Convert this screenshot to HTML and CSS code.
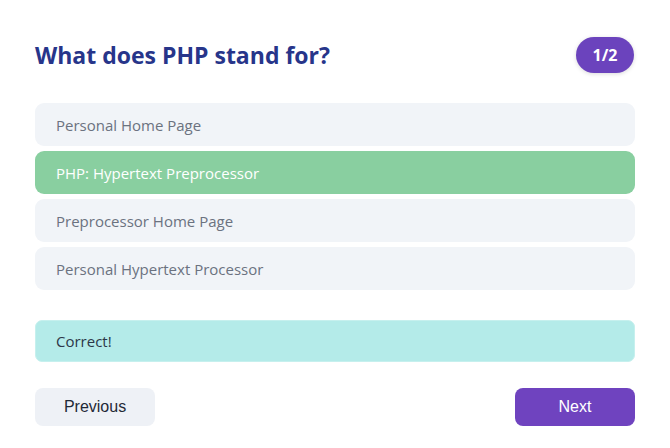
FILE: index.html
```html
<!DOCTYPE html>
<html>
<head>
<meta charset="utf-8">
<link rel="stylesheet" href="styles.css">
</head>
<body>
<div class="quiz">
  <div class="header">
    <h1 class="title">What does PHP stand for?</h1>
    <span class="badge">1/2</span>
  </div>
  <div class="options">
    <div class="option">Personal Home Page</div>
    <div class="option correct">PHP: Hypertext Preprocessor</div>
    <div class="option">Preprocessor Home Page</div>
    <div class="option">Personal Hypertext Processor</div>
  </div>
  <div class="feedback">Correct!</div>
  <div class="nav">
    <button class="btn prev">Previous</button>
    <button class="btn next">Next</button>
  </div>
</div>
</body>
</html>
```
FILE: styles.css
```css
* { box-sizing: border-box; }
html, body { margin: 0; padding: 0; background: #fff; }
body { font-family: "Open Sans", "Noto Sans", sans-serif; }
.quiz { padding: 36px 35px 0 35px; width: 670px; }
.header { display: flex; justify-content: space-between; align-items: center; height: 37px; }
.title { margin: 0; font-size: 23px; font-weight: 700; color: #27358a; letter-spacing: 0; }
.badge { display: inline-flex; align-items: center; justify-content: center; width: 58px; height: 36px; border-radius: 18px; background: #6b43bd; color: #fff; font-weight: 700; font-size: 16px; box-shadow: 0 1px 4px rgba(0,0,0,0.15); margin-right: 1px; }
.options { margin-top: 30px; display: flex; flex-direction: column; gap: 5px; }
.option { height: 43px; display: flex; align-items: center; padding-left: 21px; background: #f1f4f8; border-radius: 9px; color: #6b7280; font-size: 15px; }
.option.correct { background: #89cfa0; color: #fff; }
.feedback { margin-top: 30px; height: 42px; display: flex; align-items: center; padding-left: 20px; background: #b4ebe9; border: 1px solid #c6f0ee; border-radius: 7px; color: #2d3748; font-size: 15px; }
.nav { margin-top: 26px; display: flex; justify-content: space-between; }
.btn { width: 120px; height: 38px; border: none; border-radius: 8px; font-family: "Liberation Sans", Arial, sans-serif; font-size: 16px; cursor: pointer; }
.prev { background: #eef1f6; color: #1f2937; }
.next { background: #6f43bf; color: #fff; }
```
